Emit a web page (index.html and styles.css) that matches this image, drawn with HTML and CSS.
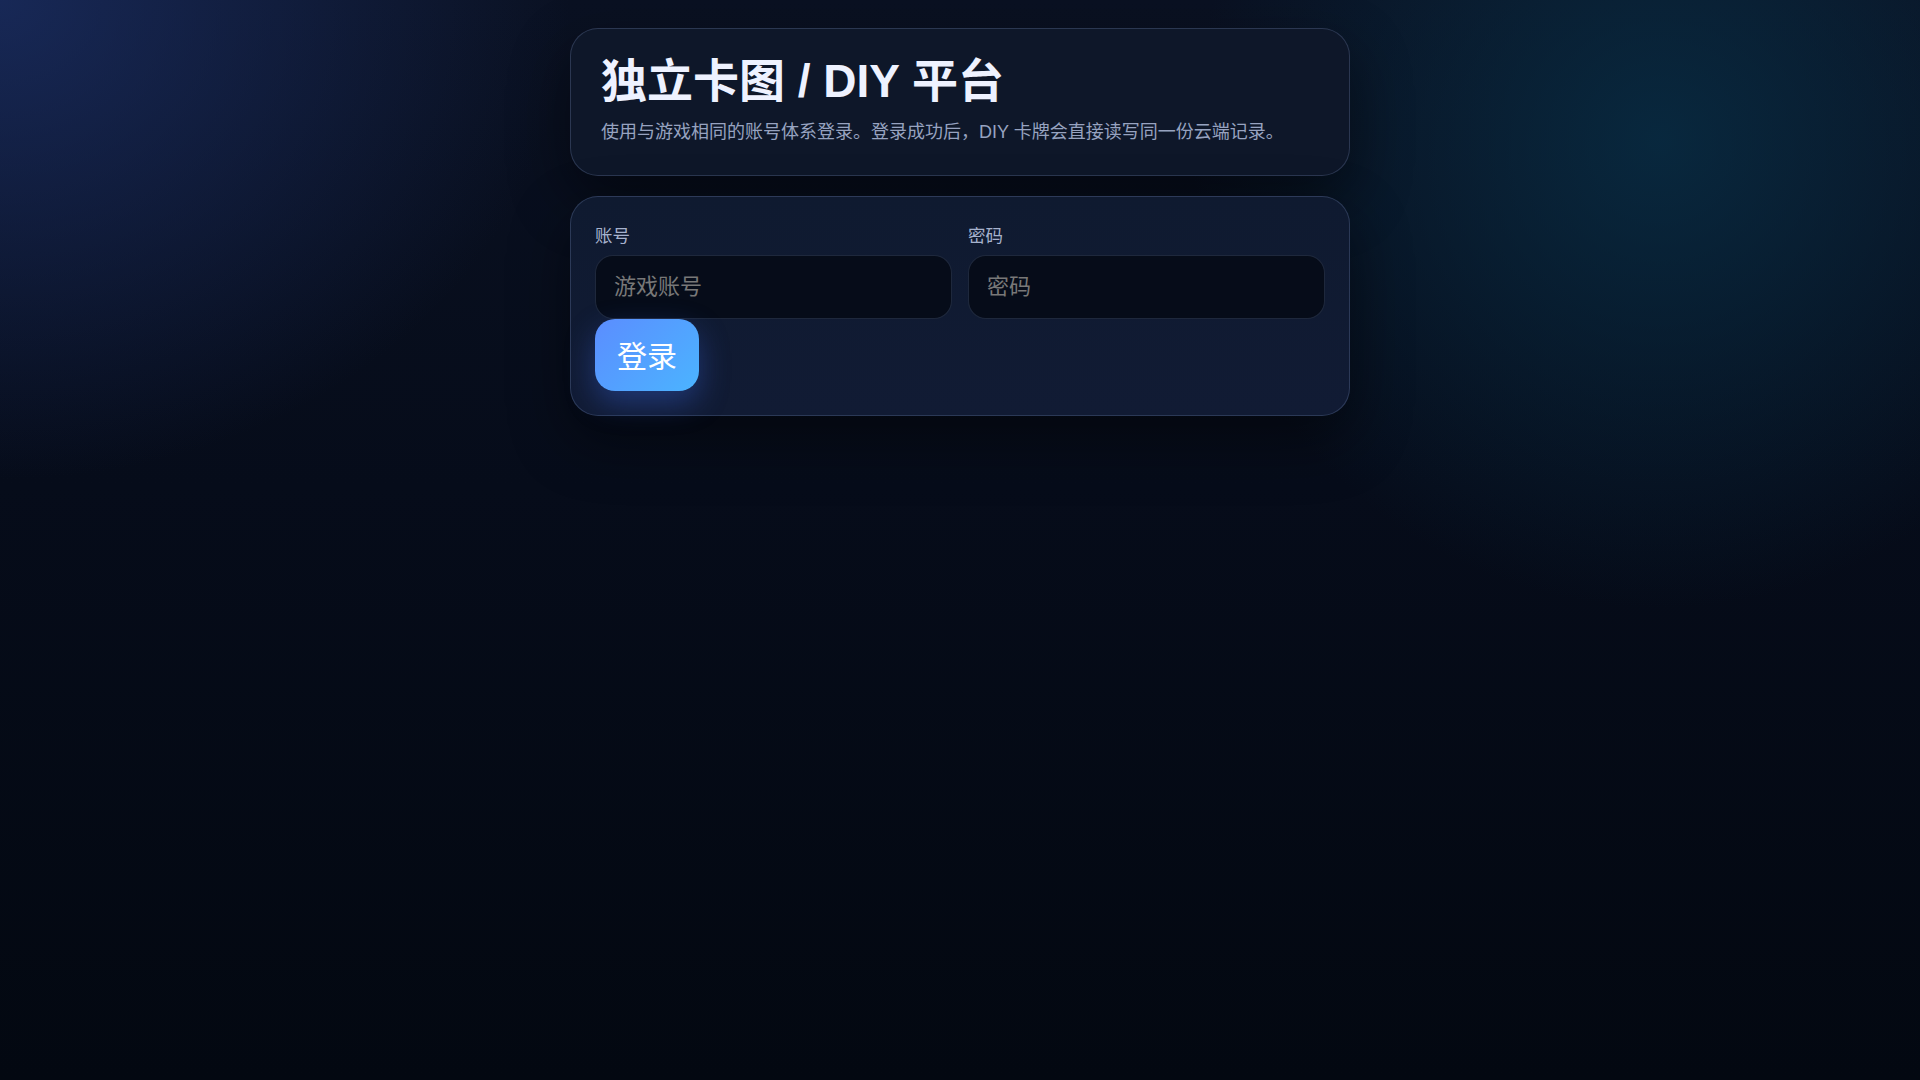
FILE: index.html
```html
<!DOCTYPE html>
<html lang="zh-CN">
<head>
<meta charset="utf-8">
<title>独立卡图 / DIY 平台</title>
<link rel="stylesheet" href="styles.css">
</head>
<body>
<main class="wrap">
  <section class="card hero">
    <h1 class="title">独立卡图 / DIY 平台</h1>
    <p class="subtitle">使用与游戏相同的账号体系登录。登录成功后，DIY 卡牌会直接读写同一份云端记录。</p>
  </section>
  <section class="card login">
    <form class="form">
      <div class="fields">
        <label class="field">
          <span class="label">账号</span>
          <input class="input" type="text" placeholder="游戏账号">
        </label>
        <label class="field">
          <span class="label">密码</span>
          <input class="input" type="password" placeholder="密码">
        </label>
      </div>
      <button class="btn" type="button">登录</button>
    </form>
  </section>
</main>
</body>
</html>
```

FILE: styles.css
```css
* { box-sizing: border-box; }
html, body { margin: 0; height: 100%; }
body {
  min-height: 100vh;
  font-family: "Liberation Sans", "Noto Sans CJK SC", sans-serif;
  color: #e5eaf5;
  background:
    radial-gradient(ellipse 760px 640px at 0% 0%, rgba(28, 48, 104, 0.75), rgba(28, 48, 104, 0) 75%),
    radial-gradient(circle 600px at 1660px 140px, rgba(8, 48, 72, 0.75), rgba(8, 48, 72, 0) 78%),
    linear-gradient(180deg, #0a1122 0%, #060c1a 45%, #030811 100%);
  background-color: #050b17;
}
.wrap {
  max-width: 780px;
  margin: 0 auto;
  padding-top: 28px;
  display: flex;
  flex-direction: column;
  gap: 20px;
}
.card {
  border: 1px solid rgba(120, 140, 185, 0.28);
  border-radius: 28px;
  box-shadow: 0 24px 60px rgba(0, 0, 0, 0.45);
}
.hero {
  background: #0e1729;
  padding: 25px 30px 28px;
}
.title {
  margin: 0 0 9px;
  font-size: 46px;
  line-height: 1.2;
  font-weight: 700;
  color: #eef2ff;
}
.subtitle {
  margin: 0;
  font-size: 18px;
  line-height: 1.6;
  color: #97a3c0;
}
.login {
  background: linear-gradient(180deg, #0f1a30 0%, #111b34 100%);
  padding: 27px 24px 24px;
}
.fields {
  display: grid;
  grid-template-columns: 1fr 1fr;
  column-gap: 16px;
}
.field { display: flex; flex-direction: column; }
.label {
  font-size: 17.5px;
  line-height: 1.45;
  color: #a6b2cd;
  margin-bottom: 6px;
}
.input {
  height: 64px;
  padding: 0 18px;
  border: 1px solid rgba(120, 140, 185, 0.22);
  border-radius: 18px;
  background: #060c19;
  color: #e5eaf5;
  font-family: inherit;
  font-size: 22px;
  outline: none;
}
.input::placeholder { color: #787878; }
.btn {
  margin-top: 0;
  height: 72px;
  padding: 3px 22px 0;
  border: none;
  border-radius: 20px;
  background: linear-gradient(135deg, #5b8dff 0%, #4bb4ff 100%);
  color: #ffffff;
  font-family: inherit;
  font-size: 30px;
  line-height: 1;
  box-shadow: 0 12px 30px rgba(60, 110, 240, 0.35);
  cursor: pointer;
}
```
